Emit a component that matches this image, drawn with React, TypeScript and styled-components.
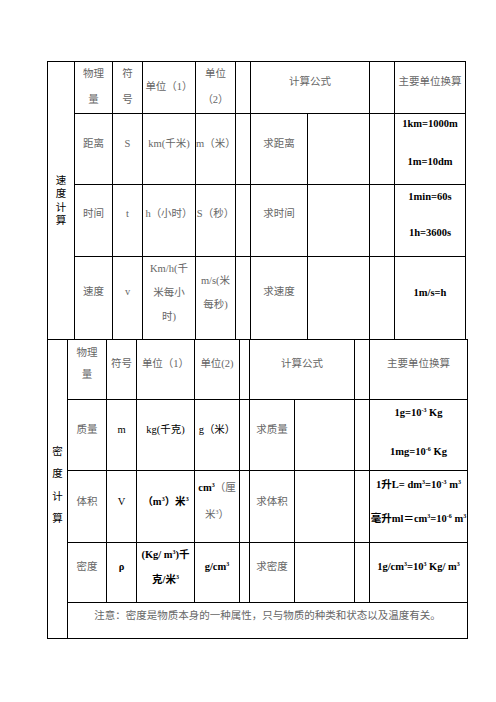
import React from "react";
import styled, { createGlobalStyle } from "styled-components";

const GlobalStyle = createGlobalStyle`
  html, body { margin: 0; padding: 0; background: #fff; }
  body { font-family: "Liberation Serif", "Noto Sans CJK SC", serif; }
`;

const Page = styled.div`
  width: 496px;
  height: 702px;
  box-sizing: border-box;
  padding: 61px 0 0 47px;
  background: #fff;
  overflow: hidden;
`;

const Sheet = styled.table<{ $w: number; $overlap?: boolean }>`
  width: ${(p) => p.$w}px;
  table-layout: fixed;
  border-collapse: collapse;
  margin-top: ${(p) => (p.$overlap ? "-1px" : "0")};
  font-size: 10.5px;
  color: #666;
`;

const Col = styled.col<{ $w: number }>`
  width: ${(p) => p.$w}px;
`;

const Row = styled.tr<{ $h: number }>`
  height: ${(p) => p.$h}px;
`;

const Cell = styled.td<{ $pb?: number; $bold?: boolean; $dark?: boolean }>`
  border: 1px solid #000;
  padding: 0 0 ${(p) => p.$pb ?? 12}px 0;
  text-align: center;
  vertical-align: middle;
  line-height: 14px;
  white-space: nowrap;
  font-weight: ${(p) => (p.$bold ? 700 : 400)};
  color: ${(p) => (p.$bold || p.$dark ? "#000" : "#666")};
`;

const Stack = styled.span<{ $gap: number; $lh?: number }>`
  display: inline-flex;
  flex-direction: column;
  align-items: center;
  gap: ${(p) => p.$gap}px;
  line-height: ${(p) => p.$lh ?? 14}px;
  vertical-align: middle;
`;

const Line = styled.span`
  display: block;
  white-space: nowrap;
`;

const Sup = styled.sup`
  font-size: 6px;
  line-height: 0;
  vertical-align: 4px;
`;

const Strong = styled.span`
  font-weight: 700;
  color: #000;
`;

const NoteText = styled.span`
  letter-spacing: 0;
`;

const Lines: React.FC<{ spacing: number; lines: React.ReactNode[] }> = ({ spacing, lines }) => (
  <Stack $gap={spacing - 14}>
    {lines.map((l, i) => (
      <Line key={i}>{l}</Line>
    ))}
  </Stack>
);

const Vertical: React.FC<{ text: string; lh: number }> = ({ text, lh }) => (
  <Stack $gap={0} $lh={lh}>
    {text.split("").map((c, i) => (
      <Line key={i}>{c}</Line>
    ))}
  </Stack>
);

const speedCols = [27, 38, 30, 53, 40, 15, 57, 62, 25, 71];
const densityCols = [20, 39, 30, 58, 45, 10, 45, 60, 15, 98];

const SpeedTable = () => (
  <Sheet $w={418}>
    <colgroup>
      {speedCols.map((w, i) => (
        <Col key={i} $w={w} />
      ))}
    </colgroup>
    <tbody>
      <Row $h={52}>
        <Cell rowSpan={4} $pb={0} $dark>
          <Vertical text="速度计算" lh={13.5} />
        </Cell>
        <Cell $pb={2}><Lines spacing={26} lines={["物理", "量"]} /></Cell>
        <Cell $pb={2}><Lines spacing={26} lines={["符", "号"]} /></Cell>
        <Cell $pb={2}>单位（1）</Cell>
        <Cell $pb={2}><Lines spacing={26} lines={["单位", "（2）"]} /></Cell>
        <Cell />
        <Cell colSpan={2}>计算公式</Cell>
        <Cell />
        <Cell>主要单位换算</Cell>
      </Row>
      <Row $h={71}>
        <Cell $pb={11}>距离</Cell>
        <Cell $pb={11}>S</Cell>
        <Cell $pb={11}>km(千米)</Cell>
        <Cell $pb={11}>m（米）</Cell>
        <Cell />
        <Cell $pb={11}>求距离</Cell>
        <Cell />
        <Cell />
        <Cell $bold $pb={13}><Lines spacing={38} lines={["1km=1000m", "1m=10dm"]} /></Cell>
      </Row>
      <Row $h={72}>
        <Cell $pb={14}>时间</Cell>
        <Cell $pb={14}>t</Cell>
        <Cell $pb={14}>h（小时）</Cell>
        <Cell $pb={14}>S（秒）</Cell>
        <Cell />
        <Cell $pb={14}>求时间</Cell>
        <Cell />
        <Cell />
        <Cell $bold $pb={12}><Lines spacing={36} lines={["1min=60s", "1h=3600s"]} /></Cell>
      </Row>
      <Row $h={83}>
        <Cell $pb={13}>速度</Cell>
        <Cell $pb={13}>v</Cell>
        <Cell $pb={11}><Lines spacing={24} lines={["Km/h(千", "米每小", "时)"]} /></Cell>
        <Cell $pb={11}><Lines spacing={24} lines={["m/s(米", "每秒)"]} /></Cell>
        <Cell />
        <Cell $pb={13}>求速度</Cell>
        <Cell />
        <Cell />
        <Cell $bold $pb={11}>1m/s=h</Cell>
      </Row>
    </tbody>
  </Sheet>
);

const DensityTable = () => (
  <Sheet $w={420} $overlap>
    <colgroup>
      {densityCols.map((w, i) => (
        <Col key={i} $w={w} />
      ))}
    </colgroup>
    <tbody>
      <Row $h={60}>
        <Cell rowSpan={5} $pb={7} $dark>
          <Vertical text="密度计算" lh={22.5} />
        </Cell>
        <Cell $pb={11}><Lines spacing={22} lines={["物理", "量"]} /></Cell>
        <Cell $pb={11}>符号</Cell>
        <Cell $pb={11}>单位（1）</Cell>
        <Cell $pb={11}>单位(2)</Cell>
        <Cell />
        <Cell colSpan={2} $pb={11}>计算公式</Cell>
        <Cell />
        <Cell $pb={11}>主要单位换算</Cell>
      </Row>
      <Row $h={71}>
        <Cell $pb={11}>质量</Cell>
        <Cell $pb={11} $dark>m</Cell>
        <Cell $pb={11} $dark>kg(千克)</Cell>
        <Cell $pb={11} $dark>g（米）</Cell>
        <Cell />
        <Cell $pb={11}>求质量</Cell>
        <Cell />
        <Cell />
        <Cell $bold $pb={6}>
          <Lines
            spacing={39}
            lines={[
              <>1g=10<Sup>-3</Sup> Kg</>,
              <>1mg=10<Sup>-6</Sup> Kg</>,
            ]}
          />
        </Cell>
      </Row>
      <Row $h={72}>
        <Cell $pb={10}>体积</Cell>
        <Cell $pb={10} $dark>V</Cell>
        <Cell $pb={10} $bold>（m<Sup>3</Sup>）米<Sup>3</Sup></Cell>
        <Cell $pb={11}>
          <Lines
            spacing={27}
            lines={[
              <><Strong>cm<Sup>3</Sup></Strong>（厘</>,
              <>米<Sup>3</Sup>）</>,
            ]}
          />
        </Cell>
        <Cell />
        <Cell $pb={10}>求体积</Cell>
        <Cell />
        <Cell />
        <Cell $bold $pb={10}>
          <Lines
            spacing={34}
            lines={[
              <>1升L= dm<Sup>3</Sup>=10<Sup>-3</Sup> m<Sup>3</Sup></>,
              <>毫升ml＝cm<Sup>3</Sup>=10<Sup>-6</Sup> m<Sup>3</Sup></>,
            ]}
          />
        </Cell>
      </Row>
      <Row $h={60}>
        <Cell $pb={12}>密度</Cell>
        <Cell $pb={12} $bold>ρ</Cell>
        <Cell $pb={11} $bold>
          <Lines
            spacing={25}
            lines={[
              <>(Kg/ m<Sup>3</Sup>)千</>,
              <>克/米<Sup>3</Sup></>,
            ]}
          />
        </Cell>
        <Cell $pb={12} $bold>g/cm<Sup>3</Sup></Cell>
        <Cell />
        <Cell $pb={12}>求密度</Cell>
        <Cell />
        <Cell />
        <Cell $bold $pb={12}>1g/cm<Sup>3</Sup>=10<Sup>3</Sup> Kg/ m<Sup>3</Sup></Cell>
      </Row>
      <Row $h={36}>
        <Cell colSpan={9} $pb={10}>
          <NoteText>注意：密度是物质本身的一种属性，只与物质的种类和状态以及温度有关。</NoteText>
        </Cell>
      </Row>
    </tbody>
  </Sheet>
);

export default function App() {
  return (
    <>
      <GlobalStyle />
      <Page>
        <SpeedTable />
        <DensityTable />
      </Page>
    </>
  );
}
